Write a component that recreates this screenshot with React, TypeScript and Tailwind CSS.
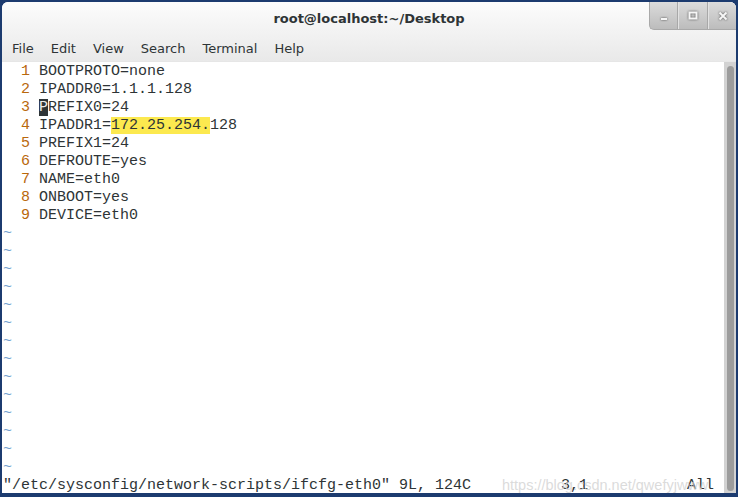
const lines: Array<string> = [
  "BOOTPROTO=none",
  "IPADDR0=1.1.1.128",
  "PREFIX0=24",
  "IPADDR1=172.25.254.128",
  "PREFIX1=24",
  "DEFROUTE=yes",
  "NAME=eth0",
  "ONBOOT=yes",
  "DEVICE=eth0",
];

const menus: Array<string> = ["File", "Edit", "View", "Search", "Terminal", "Help"];

const mono = "font-['Liberation_Mono',monospace] text-[15px] leading-[18px]";

function pad(s: string, n: number): string {
  return s + " ".repeat(Math.max(0, n - s.length));
}

const statusText =
  pad(pad('"/etc/sysconfig/network-scripts/ifcfg-eth0" 9L, 124C', 62) + "3,1", 76) + "All";

function Row({ n, text }: { n: number; text: string }) {
  let body: React.ReactNode = text;
  if (n === 3) {
    body = (
      <>
        <span className="bg-[#2e3436] text-[#eeeeec]">P</span>
        {text.slice(1)}
      </>
    );
  }
  if (n === 4) {
    body = (
      <>
        IPADDR1=<span className="bg-[#fce94f]">172.25.254.</span>128
      </>
    );
  }
  return (
    <div className="h-[18px] whitespace-pre">
      <span className="text-[#b9680c]">{`  ${n} `}</span>
      {body}
    </div>
  );
}

function WinButtons() {
  const icon = "drop-shadow-[0_0_1px_rgba(60,60,60,0.9)]";
  return (
    <div className="flex h-[28px] self-start rounded-bl-[5px] overflow-hidden bg-gradient-to-b from-[#dcdcdc] to-[#bcbcbc] border-l border-b border-[#a9a9a9]">
      <div className="w-[28px] flex items-center justify-center border-r border-[#a8a8a8]">
        <svg width="10" height="10" viewBox="0 0 10 10" className={icon}>
          <rect x="2" y="7" width="6" height="2" fill="#f6f6f6" />
        </svg>
      </div>
      <div className="w-[30px] flex items-center justify-center border-l border-[#e2e2e2] border-r border-r-[#a8a8a8]">
        <svg width="10" height="10" viewBox="0 0 10 10" className={icon}>
          <rect x="1.5" y="1.5" width="7" height="6" fill="none" stroke="#f6f6f6" strokeWidth="2" />
        </svg>
      </div>
      <div className="w-[28px] flex items-center justify-center border-l border-[#e2e2e2]">
        <svg width="10" height="10" viewBox="0 0 10 10" className={icon}>
          <path d="M1.5 1.5 L8.5 8.5 M8.5 1.5 L1.5 8.5" stroke="#f6f6f6" strokeWidth="2" />
        </svg>
      </div>
    </div>
  );
}

export default function App() {
  return (
    <div className="w-[738px] h-[497px] bg-[#1c3b6f] pt-[2px] px-[2px] pb-[4px] flex flex-col">
      <div className="flex flex-col flex-1 rounded-t-[6px] overflow-hidden bg-white">
        <div className="bg-gradient-to-b from-[#fcfcfc] to-[#e9e9e9] font-['DejaVu_Sans',sans-serif] text-[#2e3436]">
          <div className="h-[31px] grid grid-cols-[1fr_auto_1fr]">
            <div />
            <div className="self-center text-[13px] font-bold pt-[3px]">root@localhost:~/Desktop</div>
            <div className="flex justify-end">
              <WinButtons />
            </div>
          </div>
          <div className="h-[28px] flex items-center pl-[10px] gap-[17px] text-[13px] pt-[3px]">
            {menus.map((m: string) => (
              <span key={m}>{m}</span>
            ))}
          </div>
        </div>
        <div className="flex h-[432px] border-t border-[#e6e6e6]">
          <div className={`relative flex-1 pl-[1px] pt-[1px] overflow-hidden text-[#2e3436] ${mono}`}>
            {lines.map((t: string, i: number) => (
              <Row key={i} n={i + 1} text={t} />
            ))}
            {Array.from({ length: 14 }).map((_, i: number) => (
              <div key={`t${i}`} className="h-[18px] text-[#729fcf]">~</div>
            ))}
            <div className="h-[18px] whitespace-pre">{statusText}</div>
            <div className="absolute left-[500px] top-[414px] whitespace-nowrap font-['Liberation_Sans',sans-serif] text-[14.5px] text-[#d2d2d2]/80 pointer-events-none">
              https://blog.csdn.net/qwefyjwww
            </div>
          </div>
          <div className="w-[12px] bg-[#d2d2d2] pl-[3px] pr-[2px] pt-[4px] pb-[2px]">
            <div className="h-full w-[7px] rounded-full bg-[#9c9c9c]" />
          </div>
        </div>
      </div>
    </div>
  );
}
